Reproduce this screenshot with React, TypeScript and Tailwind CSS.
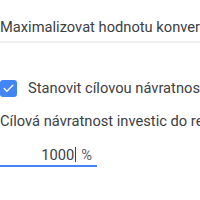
import { Check } from "lucide-react";

export default function App() {
  return (
    <div className="h-[200px] w-[200px] overflow-hidden bg-white font-['Roboto',sans-serif] text-[14.7px] leading-[20px] text-[#3c4043]">
      <div className="w-[400px]">
        <div className="mt-[17px] border-b-2 border-[#eeeeee] pb-[4px] whitespace-nowrap">
          Maximalizovat hodnotu konverzí
        </div>
        <div className="mt-[36px] flex h-[18px] items-center gap-[11px] whitespace-nowrap">
          <span className="flex h-[17px] w-[17px] items-center justify-center rounded-[3px] bg-[#4285f4]">
            <Check className="h-[13px] w-[13px] text-white" strokeWidth={2.5} />
          </span>
          <span>Stanovit cílovou návratnost investic</span>
        </div>
        <div className="mt-[14px] whitespace-nowrap">Cílová návratnost investic do reklamy</div>
        <div className="mt-[14px] flex w-[97px] items-end justify-end border-b-2 border-[#4285f4] pr-[5px]">
          <span className="mr-[5px]">
            1000
            <span className="ml-px inline-block h-[15px] w-px bg-[#3c4043] align-[-2px]" />
          </span>
          <span className="text-[#5f6368]">%</span>
        </div>
      </div>
    </div>
  );
}
